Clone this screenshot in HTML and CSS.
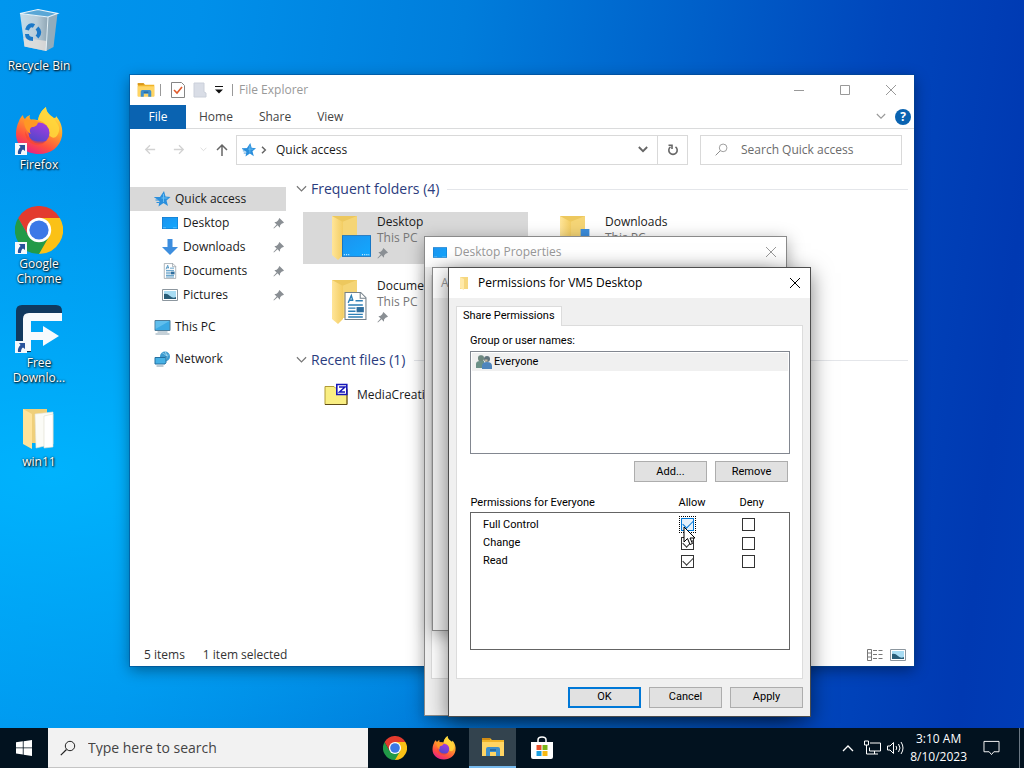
FILE: index.html
```html
<!DOCTYPE html>
<html lang="en">

<head>
    <meta charset="UTF-8">
    <meta name="viewport" content="width=device-width, initial-scale=1.0">
    <title>Desktop</title>
    <link rel="stylesheet" href="styles.css">
</head>

<body>
    <!-- shared icons -->
    <svg class="sprite" aria-hidden="true">
        <defs>
            <linearGradient id="g-fox" x1="0.8" y1="0" x2="0.3" y2="1">
                <stop offset="0" stop-color="#fff44f" />
                <stop offset="0.4" stop-color="#ffa32a" />
                <stop offset="0.75" stop-color="#ff4f40" />
                <stop offset="1" stop-color="#e5208a" />
            </linearGradient>
            <linearGradient id="g-globe" x1="0.7" y1="0" x2="0.3" y2="1">
                <stop offset="0" stop-color="#a53be0" />
                <stop offset="1" stop-color="#4b49c8" />
            </linearGradient>
            <linearGradient id="g-screen" x1="0" y1="0" x2="1" y2="1">
                <stop offset="0" stop-color="#1c93ee" />
                <stop offset="1" stop-color="#12a8ff" />
            </linearGradient>
            <linearGradient id="g-folder" x1="0" y1="0" x2="1" y2="0">
                <stop offset="0" stop-color="#ffe599" />
                <stop offset="1" stop-color="#f3cd62" />
            </linearGradient>
            <linearGradient id="g-bin" x1="0" y1="0" x2="1" y2="0">
                <stop offset="0" stop-color="#c3dcea" />
                <stop offset="0.6" stop-color="#b9cdd9" />
                <stop offset="1" stop-color="#8fa6b5" />
            </linearGradient>
        </defs>
        <symbol id="bin" viewBox="0 0 48 48">
            <path d="M5 5.500 33 9 31 43 9.500 38.500z" fill="url(#g-bin)" />
            <path d="M33 9 42.500 5.500 38.500 39 31 43z" fill="#92acbc" />
            <path d="M8.500 30 32 33 31 43 9.500 38.500z" fill="#e4dedb" opacity=".8" />
            <path d="M5 5.500 23 1.500 42.500 5.500 33 9z" fill="#5aa7d6" stroke="#eaf4fa" stroke-width="1.200" />
            <path d="M33 9 31 43" stroke="#e7f1f6" />
            <g fill="none" stroke="#1a78c8" stroke-width="4">
                <path d="M12 22c1-4 4-6 7-4" />
                <path d="M22 20c3 3 3 6 0 9" />
                <path d="M18 31c-4 0-6-2-6-5" />
            </g>
        </symbol>
        <symbol id="firefox" viewBox="0 0 48 48">
            <path d="M4 14c1-3 2-4 4-6 0 2 1 3 2 4 2-3 3-3 5-4-1 2 0 4 1 5 2-1 5 0 7 0 1-5 3-9 8-13 0 5 4 8 8 11 2 0 2-1 2-2 5 6 7 12 6 20-2 11-11 18-23 18C10 47 1 38 1 27c0-5 1-9 3-13z" fill="url(#g-fox)" />
            <path d="M31 0c-5 4-7 8-8 13 7 2 12 7 11 15 5 6 9 1 10-4 1-4-1-7-5-12-5-4-8-7-8-12z" fill="#ffd83c" opacity=".85" />
            <circle cx="24" cy="26" r="10.500" fill="url(#g-globe)" />
            <path d="M9 14c5-2 10-2 14 1 0 3-3 5-6 5-2 1-3 4-1 7-4-2-7-7-7-13z" fill="#ff9824" />
            <path d="M10 24c4 9 10 12 21 10-5 7-21 5-21-10z" fill="#f5452f" opacity=".65" />
        </symbol>
        <symbol id="chrome" viewBox="0 0 48 48">
            <path d="M24 24V12H44.800A24 24 0 0 1 24 48z" fill="#fbc116" />
            <path d="M3.200 12A24 24 0 0 0 24 48l10.400-18L24 24 13.600 30z" fill="#229a48" />
            <path d="M24 12h20.800A24 24 0 0 0 3.200 12l10.400 18z" fill="#e33b2e" />
            <circle cx="24" cy="24" r="12.200" fill="#fff" />
            <circle cx="24" cy="24" r="9.600" fill="#3b78e7" />
        </symbol>
        <symbol id="fdm" viewBox="0 0 48 48">
            <path d="M1 6q0-6 6-6h34q6 0 6 6v10H16v31H7q-6 0-6-6z" fill="#10395f" />
            <path d="M8 14q0-6 6-6h33v8H16v11h12v-6l16 10-16 10v-6H16v11H8z" fill="#f6fafd" />
        </symbol>
        <symbol id="shortcut" viewBox="0 0 12 12">
            <path d="M0 0h12v12H0z" fill="#f5f8fb" />
            <path d="M4 2h6v6L8 6.500C6.500 7.500 6 9 6 11H3C2.500 8 3.500 6 5.500 4z" fill="#28539c" />
        </symbol>
        <symbol id="openfolder" viewBox="0 0 48 48">
            <path d="M8 5h24v34H8z" fill="#efcf7a" />
            <path d="M20 10l18-2v32l-17 4z" fill="#fbfbf6" stroke="#e4e2d4" stroke-width=".6" />
            <path d="M29 12l9-2v33l-9 1z" fill="#fff" stroke="#dedccf" stroke-width=".6" />
            <path d="M8 5l9 5v35L8 40z" fill="#ffe39a" />
        </symbol>
        <symbol id="folder" viewBox="0 0 42 46">
            <path d="M2 2h25v38H2z" fill="#edc85e" />
            <path d="M12 8 27 2v38H12z" fill="#f5d576" />
            <path d="M2 2l11 6v33l-5 5-6-5z" fill="url(#g-folder)" />
        </symbol>
        <symbol id="monitor" viewBox="0 0 16 12">
            <path d="M0 0h16v12H0z" fill="#1673c0" />
            <path d="M.5.5h15v11H.5z" fill="url(#g-screen)" />
            <path d="M1 10.800h3M11 10.800h4" stroke="#fff" stroke-width=".5" stroke-dasharray=".6 .6" />
        </symbol>
        <symbol id="down" viewBox="0 0 16 16">
            <path d="M5.500 0h5v8H16l-8 8-8-8h5.500z" fill="#3d8ede" />
        </symbol>
        <symbol id="doc" viewBox="0 0 22 28">
            <path d="M1 1h15l5 5v21H1z" fill="#fff" stroke="#748089" />
            <path d="M15.500 1v5.500H21" fill="none" stroke="#748089" />
            <path d="M4 11 7 4l1.500 5M5 8.500h4M11 9h7M4 13h14M4 16h7M4 19h7M4 22h14M4 24.500h14" fill="none" stroke="#2d7fb5" stroke-width="1.300" />
            <path d="M12 15h7v5h-7z" fill="#2e6e9e" />
        </symbol>
        <symbol id="picture" viewBox="0 0 16 12">
            <path d="M.5.5h15v11H.5z" fill="#fff" stroke="#8c969e" />
            <path d="M2 2h12v8H2z" fill="#a8dcf3" />
            <path d="M2 5q3-1 6 2t6 1v2H2z" fill="#285d78" />
        </symbol>
        <symbol id="pc" viewBox="0 0 16 16">
            <path d="M.5 1.500h15v10H.5z" fill="#3ba9e4" stroke="#4f7d9a" />
            <path d="M1 2h14L1 10z" fill="#79cdf4" opacity=".6" />
            <path d="M3 13h10M1 15h14" stroke="#8ba2b1" />
        </symbol>
        <symbol id="network" viewBox="0 0 16 16">
            <circle cx="10.500" cy="5.500" r="5" fill="#3e9bd0" />
            <path d="M8 2c3 1 2 3 6 2M11 1q3 5 0 9" fill="none" stroke="#9ed6ee" />
            <path d="M.5 6.500h10l1-1v6l-1 1.500H.5z" fill="#47b1e5" stroke="#256f9f" />
            <path d="M2 15h7" stroke="#7c98a8" />
        </symbol>
        <symbol id="star" viewBox="0 0 16 16">
            <path d="M9.500 0 11 5.500l5 .5-4 3.500L13.500 15 9 12l-5 3.500L5 10 0 6.500l5.500-.500z" fill="#2b8fdc" />
            <path d="M0 6.500h6M1 9h5M2 11.500h3" stroke="#2b8fdc" stroke-width="1" />
            <path d="M9 3v8M7 7h6" stroke="#67bdf3" stroke-width="1" />
        </symbol>
        <symbol id="pin" viewBox="0 0 12 12">
            <path d="M7 0 12 5 10.500 6 10 5.800 7.800 8 7.500 10.500 5 8 1 11.500 .5 11 4 7 1.500 4.500 4 4.200 6.200 2 6 1.500z" fill="#8a8f94" />
        </symbol>
        <symbol id="chevron" viewBox="0 0 12 8">
            <path d="M1 1l5 5 5-5" fill="none" stroke="currentColor" stroke-width="1.300" />
        </symbol>
        <symbol id="boldchevron" viewBox="0 0 12 8">
            <path d="M1 1l5 5 5-5" fill="none" stroke="currentColor" stroke-width="2.200" />
        </symbol>
        <symbol id="close" viewBox="0 0 12 12">
            <path d="M1 1l10 10M11 1 1 11" stroke="currentColor" fill="none" />
        </symbol>
        <symbol id="arrow" viewBox="0 0 14 12">
            <path d="M13 6H2M7 1 2 6l5 5" stroke="currentColor" stroke-width="1.500" fill="none" />
        </symbol>
        <symbol id="lens" viewBox="0 0 16 16">
            <circle cx="10" cy="6" r="4.700" fill="none" stroke="currentColor" />
            <path d="M6.500 9.500.8 15.200" stroke="currentColor" stroke-width="1.200" />
        </symbol>
        <symbol id="explorer" viewBox="0 0 24 20">
            <path d="M1 1h8l2 2h12v15H1z" fill="#f0b429" />
            <path d="M1 5h22v14H1z" fill="#ffd564" />
            <path d="M1 1h8v2H1z" fill="#d28c14" />
            <path d="M5 19v-7q0-2 2-2h10q2 0 2 2v7h-4v-4H9v4z" fill="#3e8fcb" />
            <path d="M9 12h6v2H9z" fill="#276da5" />
        </symbol>
    </svg>

    <main class="desktop">
        <nav class="shortcuts" aria-label="Desktop icons">
            <a class="shortcut" href="#"><span class="shortcut-icon"><svg><use href="#bin" /></svg></span>Recycle Bin</a>
            <a class="shortcut" href="#"><span class="shortcut-icon"><svg><use href="#firefox" /></svg><svg class="link-mark"><use href="#shortcut" /></svg></span>Firefox</a>
            <a class="shortcut" href="#"><span class="shortcut-icon"><svg><use href="#chrome" /></svg><svg class="link-mark"><use href="#shortcut" /></svg></span>Google<br>Chrome</a>
            <a class="shortcut" href="#"><span class="shortcut-icon"><svg><use href="#fdm" /></svg><svg class="link-mark"><use href="#shortcut" /></svg></span>Free<br>Downlo...</a>
            <a class="shortcut" href="#"><span class="shortcut-icon"><svg><use href="#openfolder" /></svg></span>win11</a>
        </nav>

        <section class="window explorer" aria-label="File Explorer">
            <header class="explorer-title">
                <svg class="app-icon"><use href="#explorer" /></svg>
                <span class="bar"></span>
                <button class="quick" aria-label="Properties"><svg viewBox="0 0 14 16"><path d="M.5.5h10l3 3v12H.5z" fill="#fff" stroke="#858585" /><path d="M3 8l3 3 5-6" fill="none" stroke="#e05a2b" stroke-width="1.600" /></svg></button>
                <button class="quick" aria-label="New folder"><svg viewBox="0 0 14 16"><path d="M1 1h10v9l2 1v4H1z" fill="#d9dde6" stroke="#cbd0da" /></svg></button>
                <button class="quick small" aria-label="Customize"><svg viewBox="0 0 8 8"><path d="M0 .5h8" stroke="#111" /><path d="M0 3.500h8L4 7.500z" fill="#111" /></svg></button>
                <span class="bar"></span>
                <span class="explorer-name">File Explorer</span>
                <div class="window-buttons">
                    <button aria-label="Minimize"><svg viewBox="0 0 12 12"><path d="M1 6.500h10" stroke="currentColor" /></svg></button>
                    <button aria-label="Maximize"><svg viewBox="0 0 12 12"><path d="M1.500 1.500h9v9h-9z" fill="none" stroke="currentColor" /></svg></button>
                    <button aria-label="Close"><svg><use href="#close" /></svg></button>
                </div>
            </header>
            <nav class="ribbon" aria-label="Ribbon">
                <a class="file-tab" href="#">File</a>
                <a href="#">Home</a>
                <a href="#">Share</a>
                <a href="#">View</a>
                <button class="expand" aria-label="Expand ribbon"><svg><use href="#chevron" /></svg></button>
                <button class="help" aria-label="Help">?</button>
            </nav>
            <div class="address-row">
                <button class="nav-button faded" aria-label="Back"><svg><use href="#arrow" /></svg></button>
                <button class="nav-button faded forward" aria-label="Forward"><svg><use href="#arrow" /></svg></button>
                <button class="nav-button faded tiny" aria-label="Recent"><svg><use href="#chevron" /></svg></button>
                <button class="nav-button up" aria-label="Up"><svg><use href="#arrow" /></svg></button>
                <div class="address">
                    <svg class="address-star"><use href="#star" /></svg>
                    <svg class="crumb"><use href="#boldchevron" /></svg>
                    <span class="address-text">Quick access</span>
                    <button class="history" aria-label="Previous locations"><svg><use href="#boldchevron" /></svg></button>
                    <button class="refresh" aria-label="Refresh"><svg viewBox="0 0 12 12"><path d="M8.500 2.800A4.200 4.200 0 1 1 3.500 2.800M1.500 1.200H5V5" fill="none" stroke="currentColor" stroke-width="1.600" /></svg></button>
                </div>
                <label class="find">
                    <svg><use href="#lens" /></svg>
                    <input type="text" placeholder="Search Quick access" aria-label="Search Quick access">
                </label>
            </div>
            <div class="explorer-body">
                <nav class="tree" aria-label="Folders">
                    <a class="root selected" href="#"><svg><use href="#star" /></svg>Quick access</a>
                    <a href="#"><svg><use href="#monitor" /></svg>Desktop<svg class="pin"><use href="#pin" /></svg></a>
                    <a href="#"><svg><use href="#down" /></svg>Downloads<svg class="pin"><use href="#pin" /></svg></a>
                    <a href="#"><svg><use href="#doc" /></svg>Documents<svg class="pin"><use href="#pin" /></svg></a>
                    <a href="#"><svg><use href="#picture" /></svg>Pictures<svg class="pin"><use href="#pin" /></svg></a>
                    <a class="root spaced" href="#"><svg><use href="#pc" /></svg>This PC</a>
                    <a class="root spaced" href="#"><svg><use href="#network" /></svg>Network</a>
                </nav>
                <div class="content">
                    <h2><svg><use href="#chevron" /></svg>Frequent folders (4)</h2>
                    <div class="folders">
                        <a class="folder selected" href="#">
                            <span class="folder-icon"><svg><use href="#folder" /></svg><svg class="badge screen"><use href="#monitor" /></svg></span>
                            <span class="folder-text">Desktop<small>This PC</small><svg class="pin"><use href="#pin" /></svg></span>
                        </a>
                        <a class="folder" href="#">
                            <span class="folder-icon"><svg><use href="#folder" /></svg><svg class="badge download"><use href="#down" /></svg></span>
                            <span class="folder-text">Downloads<small>This PC</small><svg class="pin"><use href="#pin" /></svg></span>
                        </a>
                        <a class="folder" href="#">
                            <span class="folder-icon"><svg><use href="#folder" /></svg><svg class="badge paper"><use href="#doc" /></svg></span>
                            <span class="folder-text">Documents<small>This PC</small><svg class="pin"><use href="#pin" /></svg></span>
                        </a>
                    </div>
                    <h2><svg><use href="#chevron" /></svg>Recent files (1)</h2>
                    <a class="recent" href="#">
                        <svg viewBox="0 0 24 22"><path d="M1 3h9l2 2h11v16H1z" fill="#f9ee82" stroke="#b09a35" /><path d="M1 21h22V6" fill="none" stroke="#5f4c17" /><path d="M12.800 1h10v10h-10z" fill="#fff" stroke="#1616b8" stroke-width="1.600" /><path d="M15 3.500h6L15.500 8.500H21" fill="none" stroke="#1616b8" stroke-width="1.500" /></svg>
                        MediaCreationTool22H2
                    </a>
                </div>
            </div>
            <footer class="status">
                <span>5 items</span>
                <span>1 item selected</span>
                <div class="views">
                    <button aria-label="Details view"><svg viewBox="0 0 16 12"><path d="M.5.5h4v11h-4zM.5 4h4M.5 8h4" fill="none" stroke="#777" /><path d="M6 1.500h10M6 5.500h10M6 9.500h10" stroke="#777" stroke-dasharray="4 1.500" /></svg></button>
                    <button aria-label="Large icons view"><svg><use href="#picture" /></svg></button>
                </div>
            </footer>
        </section>

        <section class="window dialog properties" aria-label="Desktop Properties">
            <header class="dialog-title">
                <svg class="title-icon"><use href="#monitor" /></svg>
                <span>Desktop Properties</span>
                <button aria-label="Close"><svg><use href="#close" /></svg></button>
            </header>
            <div class="properties-page"></div>
        </section>

        <section class="window dialog sharing" aria-label="Advanced Sharing">
            <header class="dialog-title"><span>A</span></header>
        </section>

        <section class="window dialog permissions" aria-label="Permissions for VM5 Desktop">
            <header class="dialog-title">
                <svg class="title-icon" viewBox="0 0 14 14"><path d="M3 1h8v12H3z" fill="#f6d77f" /><path d="M3 1l4 2v11l-4-2z" fill="#ffe9a8" /></svg>
                <span>Permissions for VM5 Desktop</span>
                <button aria-label="Close"><svg><use href="#close" /></svg></button>
            </header>
            <form class="permissions-form">
                <button class="tab" type="button">Share Permissions</button>
                <div class="page">
                    <div class="caption" id="group-label">Group or user names:</div>
                    <ul class="group-list" aria-labelledby="group-label">
                        <li>
                            <svg viewBox="0 0 16 14"><circle cx="5" cy="3.500" r="3" fill="#7f9488" /><path d="M0 13V9q0-3 4-3h4v7z" fill="#6b9087" /><path d="M2 3q0-3 3-3t3 3l-1 3H3z" fill="#63807a" opacity=".6" /><circle cx="11" cy="4" r="3" fill="#60737c" /><path d="M6 14v-3q0-4 5-4t5 4v3z" fill="#4f85bd" /><path d="M8.500 4.500h3v2h-2z" fill="#c9b79e" /></svg>
                            Everyone
                        </li>
                    </ul>
                    <div class="list-actions">
                        <button type="button">Add...</button>
                        <button type="button">Remove</button>
                    </div>
                    <table class="rights">
                        <thead>
                            <tr><th scope="col">Permissions for Everyone</th><th scope="col">Allow</th><th scope="col">Deny</th></tr>
                        </thead>
                        <tbody>
                            <tr>
                                <th scope="row">Full Control</th>
                                <td><input class="focused" type="checkbox" aria-label="Allow Full Control" checked></td>
                                <td><input type="checkbox" aria-label="Deny Full Control"></td>
                            </tr>
                            <tr>
                                <th scope="row">Change</th>
                                <td><input type="checkbox" aria-label="Allow Change" checked></td>
                                <td><input type="checkbox" aria-label="Deny Change"></td>
                            </tr>
                            <tr>
                                <th scope="row">Read</th>
                                <td><input type="checkbox" aria-label="Allow Read" checked></td>
                                <td><input type="checkbox" aria-label="Deny Read"></td>
                            </tr>
                            <tr class="spare"><td colspan="3"></td></tr>
                        </tbody>
                    </table>
                </div>
                <div class="dialog-actions">
                    <button class="default" type="button">OK</button>
                    <button type="button">Cancel</button>
                    <button type="button">Apply</button>
                </div>
            </form>
        </section>

        <svg class="pointer" viewBox="0 0 13 20" aria-hidden="true"><path d="M1 1v15l3.500-3.500L7 18.500l2.500-1L7 12h5z" fill="#fff" stroke="#000" /></svg>
    </main>

    <footer class="taskbar">
        <button class="start" aria-label="Start"><svg viewBox="0 0 16 16"><path d="M0 2.300 6.800 1.300V7.500H0zM7.600 1.200 16 0v7.500H7.600zM0 8.300h6.800v6.200L0 13.600zM7.600 8.300H16V16l-8.400-1.300z" fill="#fff" /></svg></button>
        <label class="task-search">
            <svg><use href="#lens" /></svg>
            <input type="text" placeholder="Type here to search" aria-label="Type here to search">
        </label>
        <div class="tasks">
            <button aria-label="Google Chrome"><svg><use href="#chrome" /></svg></button>
            <button aria-label="Firefox"><svg><use href="#firefox" /></svg></button>
            <button class="running" aria-label="File Explorer"><svg><use href="#explorer" /></svg></button>
            <button aria-label="Microsoft Store"><svg viewBox="0 0 24 24"><path d="M8 7V4q0-3 4-3t4 3v3" fill="none" stroke="#fff" stroke-width="1.500" /><path d="M1 6h22v15q0 2-2 2H3q-2 0-2-2z" fill="#fff" /><path d="M6.500 9h5v5h-5z" fill="#e8502b" /><path d="M12.500 9h5v5h-5z" fill="#7cb518" /><path d="M6.500 15h5v5h-5z" fill="#1a9fe0" /><path d="M12.500 15h5v5h-5z" fill="#f9b913" /></svg></button>
        </div>
        <div class="tray">
            <button class="tray-up" aria-label="Show hidden icons"><svg><use href="#chevron" /></svg></button>
            <button aria-label="Network"><svg viewBox="0 0 17 15"><path d="M6 2.500h10.500v8H5.500V7M10.500 10.500v3M6 13.500h8M.5.500h4v4h-4zM2.500 4.500v9H6" fill="none" stroke="#fff" /></svg></button>
            <button aria-label="Volume"><svg viewBox="0 0 17 15"><path d="M.5 5.500h2.500l3.500-3.500v11L3 9.500H.5zM9 5.500q1.500 2 0 4M11.500 3.500q3 4 0 8M14 1.500q4 6 0 12" fill="none" stroke="#fff" /></svg></button>
            <time class="clock" datetime="2023-08-10T03:10"><span>3:10 AM</span><span>8/10/2023</span></time>
            <button class="notices" aria-label="Notifications"><svg viewBox="0 0 17 17"><path d="M.5 1.500h16v11h-5.500l-2.500 3-2.500-3H.5z" fill="none" stroke="#fff" /></svg></button>
        </div>
    </footer>
</body>

</html>
```
FILE: styles.css
```css
* {
    box-sizing: border-box;
}

html,
body {
    height: 100%;
    margin: 0;
}

body {
    display: flex;
    flex-direction: column;
    overflow: hidden;
    font: 12px/16px "Open Sans", "Noto Sans", sans-serif;
    color: #1a1a1a;
}

a {
    color: inherit;
    text-decoration: none;
}

button {
    padding: 0;
    border: 0;
    background: none;
    color: inherit;
    font: inherit;
}

input {
    min-width: 0;
    border: 0;
    background: none;
    font: inherit;
    outline: 0;
}

svg {
    display: block;
    flex: none;
    width: 16px;
    height: 16px;
}

.sprite {
    position: absolute;
    width: 0;
    height: 0;
}

.desktop {
    position: relative;
    flex: 1;
    min-height: 0;
    overflow: hidden;
    background:
        radial-gradient(ellipse at 5% 65%, rgba(0, 182, 255, .9) 0%, rgba(0, 170, 250, 0) 50%),
        linear-gradient(97deg, #0096ee 0%, #0090ea 18%, #007ddb 42%, #0061ca 62%, #0046bc 80%, #0039b2 94%, #003cb6 100%);
}

/* desktop shortcuts */
.shortcuts {
    display: grid;
    grid-template-columns: 78px;
    grid-auto-rows: 99px;
}

.shortcut {
    display: flex;
    flex-direction: column;
    align-items: center;
    padding-top: 8px;
    color: #fff;
    line-height: 15px;
    text-align: center;
    white-space: nowrap;
    text-shadow: 1px 1px 2px #000, 0 0 2px rgba(0, 0, 0, .8);
}

.shortcut-icon {
    position: relative;
    margin-bottom: 2px;
}

.shortcut-icon svg {
    width: 48px;
    height: 48px;
}

.shortcut-icon .link-mark {
    position: absolute;
    left: 0;
    bottom: 0;
    width: 12px;
    height: 12px;
}

/* windows */
.window {
    position: absolute;
    display: flex;
    flex-direction: column;
}

.explorer {
    inset: 75px 110px 62px 130px;
    background: #fff;
    box-shadow: 0 0 0 1px rgba(0, 70, 140, .5), 0 4px 14px rgba(0, 0, 0, .4);
}

.explorer-title {
    display: flex;
    align-items: center;
    height: 30px;
    padding-left: 7px;
    color: #999;
}

.explorer-title .app-icon {
    width: 18px;
}

.bar {
    width: 1px;
    height: 12px;
    margin: 0 6px 0 5px;
    background: #999;
}

.quick {
    margin: 0 4px;
}

.quick svg {
    width: 14px;
}

.quick.small svg {
    width: 8px;
    height: 8px;
}

.window-buttons {
    display: flex;
    margin-left: auto;
}

.window-buttons button {
    display: grid;
    place-items: center;
    width: 46px;
    height: 28px;
}

.window-buttons svg {
    width: 12px;
    height: 12px;
}

.ribbon {
    display: flex;
    align-items: stretch;
    height: 24px;
    border-bottom: 1px solid #dadbdc;
    line-height: 24px;
    color: #444;
}

.ribbon a {
    padding: 0 13px;
}

.ribbon .file-tab {
    width: 56px;
    margin-bottom: -1px;
    padding: 0;
    background: #0a63b1;
    color: #fff;
    text-align: center;
}

.ribbon .expand {
    margin-left: auto;
    color: #999;
}

.expand svg {
    width: 10px;
    height: 7px;
}

.help {
    align-self: center;
    width: 16px;
    height: 16px;
    margin: 0 3px 0 9px;
    border-radius: 50%;
    background: #0a63b1;
    color: #fff;
    font-weight: bold;
    line-height: 16px;
}

.address-row {
    display: flex;
    align-items: center;
    height: 41px;
    padding: 0 12px 0 5px;
}

.nav-button {
    display: grid;
    place-items: center;
    width: 29px;
    height: 30px;
    color: #666;
}

.nav-button svg {
    width: 12px;
    height: 11px;
}

.nav-button.faded {
    color: #d2d2d2;
}

.nav-button.tiny {
    width: 20px;
}

.nav-button.tiny svg {
    width: 7px;
    height: 5px;
}

.forward svg {
    transform: scaleX(-1);
}

.nav-button.up {
    width: 18px;
    margin-right: 5px;
}

.nav-button.up svg {
    width: 14px;
    height: 12px;
    transform: rotate(90deg);
}

.address {
    display: flex;
    flex: 1;
    align-items: center;
    height: 30px;
    border: 1px solid #d9d9d9;
    color: #666;
}

.address-star {
    width: 14px;
    height: 14px;
    margin-left: 5px;
}

.crumb {
    width: 8px;
    height: 6px;
    margin: 0 8px 0 4px;
    transform: rotate(-90deg);
}

.address-text {
    flex: 1;
    color: #1a1a1a;
}

.history svg {
    width: 10px;
    height: 7px;
    margin-right: 9px;
}

.refresh {
    display: grid;
    place-items: center;
    align-self: stretch;
    width: 30px;
    border-left: 1px solid #d9d9d9;
}

.refresh svg {
    width: 12px;
    height: 12px;
}

.find {
    display: flex;
    align-items: center;
    width: 202px;
    height: 30px;
    margin-left: 12px;
    padding-left: 14px;
    border: 1px solid #d9d9d9;
    color: #8a8a8a;
}

.find svg {
    width: 13px;
    height: 13px;
}

.find input {
    flex: 1;
    margin-left: 11px;
    padding: 0 2px;
}

.find input::placeholder {
    color: #6b6b6b;
}

.explorer-body {
    display: flex;
    flex: 1;
    min-height: 0;
    padding-top: 7px;
}

.tree {
    width: 156px;
    margin: 10px 10px 0 0;
}

.tree a {
    display: flex;
    align-items: center;
    gap: 5px;
    height: 24px;
    padding-left: 32px;
}

.tree .root {
    gap: 4px;
    padding-left: 24px;
}

.tree .root svg {
    width: 17px;
}

.tree .spaced {
    margin-top: 8px;
}

.selected {
    background: #d9d9d9;
}

svg.pin {
    width: 11px;
    height: 11px;
}

.tree .pin {
    margin: 0 2px 0 auto;
}

.content {
    flex: 1;
    min-width: 0;
    padding-right: 6px;
}

.content h2 {
    display: flex;
    align-items: center;
    gap: 4px;
    height: 24px;
    margin: 0;
    color: #2b3c7e;
    font-size: 14px;
    font-weight: normal;
}

.content h2 svg {
    width: 11px;
    height: 8px;
    color: #777;
}

.content h2::after {
    content: "";
    flex: 1;
    height: 1px;
    margin-left: 4px;
    background: #e4e6ea;
}

.folders {
    display: grid;
    grid-template-columns: repeat(auto-fill, 225px);
    grid-auto-rows: 52px;
    gap: 12px 3px;
    padding: 11px 7px 20px;
}

.folder {
    display: flex;
    align-items: flex-start;
    gap: 5px;
    padding: 2px 0 0 27px;
}

.folder-icon {
    position: relative;
}

.folder-icon svg {
    width: 42px;
    height: 46px;
}

.folder-icon .badge {
    position: absolute;
    right: 1px;
    bottom: 3px;
}

.folder-icon .screen {
    width: 29px;
    height: 22px;
}

.folder-icon .download {
    right: 1px;
    width: 28px;
    height: 28px;
}

.folder-icon .paper {
    right: 5px;
    width: 23px;
    height: 30px;
}

.folder-text small {
    display: block;
    color: #777;
    font-size: 12px;
}

.folder-text .pin {
    margin-top: 2px;
}

.recent {
    display: flex;
    align-items: center;
    gap: 9px;
    margin: 11px 0 0 28px;
}

.recent svg {
    width: 24px;
    height: 23px;
}

.status {
    display: flex;
    align-items: center;
    gap: 18px;
    height: 24px;
    padding: 2px 8px 0 14px;
    color: #333;
}

.views {
    display: flex;
    gap: 7px;
    margin-left: auto;
}

.views svg {
    height: 12px;
}

/* dialogs */
.dialog {
    border: 1px solid #8a8a8a;
    background: #f0f0f0;
    box-shadow: 0 4px 16px rgba(0, 0, 0, .35);
}

.dialog-title {
    display: flex;
    align-items: center;
    gap: 7px;
    height: 30px;
    padding: 0 9px 0 8px;
    background: #fff;
    color: #999;
}

.dialog-title button {
    margin-left: auto;
}

.dialog-title button svg {
    width: 12px;
    height: 12px;
}

.dialog-title .title-icon {
    width: 14px;
    height: 11px;
}

.properties {
    top: 236px;
    left: 424px;
    width: 363px;
    height: 480px;
}

.properties-page {
    flex: 1;
    margin: 8px 6px 36px;
    border: 1px solid #dcdcdc;
    background: #fff;
}

.sharing {
    top: 267px;
    left: 432px;
    width: 340px;
    height: 364px;
}

.permissions {
    top: 267px;
    left: 448px;
    width: 363px;
    border-color: #4d4d4d;
    box-shadow: 0 6px 20px rgba(0, 0, 0, .5);
}

.permissions .dialog-title {
    color: #000;
}

.permissions .title-icon {
    height: 14px;
}

.permissions-form {
    padding: 8px 7px;
    color: #000;
    font-family: Roboto, "Liberation Sans", sans-serif;
    font-size: 11px;
}

.tab {
    position: relative;
    display: block;
    height: 20px;
    margin-bottom: -1px;
    padding: 0 6px 2px;
    border: 1px solid #dcdcdc;
    border-bottom: 0;
    background: #fff;
}

.page {
    padding: 7px 12px 28px 13px;
    border: 1px solid #dcdcdc;
    background: #fff;
}

.group-list {
    height: 103px;
    margin: 2px 0 7px;
    padding: 1px;
    border: 1px solid #828790;
    list-style: none;
}

.group-list li {
    display: flex;
    align-items: center;
    gap: 2px;
    height: 18px;
    padding-left: 4px;
    background: #f0f0f0;
}

.group-list svg {
    height: 14px;
}

.list-actions,
.dialog-actions {
    display: flex;
    justify-content: flex-end;
    gap: 8px;
}

.list-actions {
    padding-right: 2px;
}

.list-actions button,
.dialog-actions button {
    width: 73px;
    height: 21px;
    border: 1px solid #adadad;
    background: #e1e1e1;
}

.dialog-actions {
    margin-top: 8px;
}

.dialog-actions .default {
    border: 2px solid #0078d7;
}

.rights {
    width: 100%;
    margin-top: 12px;
    border-collapse: collapse;
    table-layout: fixed;
}

.rights th,
.rights td {
    height: 18px;
    padding: 0;
    font-weight: normal;
    text-align: left;
}

.rights thead th:nth-child(2) {
    width: 61px;
}

.rights thead th:nth-child(3) {
    width: 50px;
}

.rights tbody {
    border: 1px solid #646464;
}

.rights tbody th {
    padding-left: 12px;
}

.rights tbody tr:first-child > * {
    height: 22px;
    padding-top: 3px;
}

.rights .spare td {
    height: 79px;
}

.rights input {
    display: block;
    position: relative;
    width: 13px;
    height: 13px;
    margin: 0 2px;
    border: 1px solid #333;
    background: #fff;
    appearance: none;
}

.rights input:checked::after {
    content: "";
    position: absolute;
    top: 1px;
    left: 1px;
    width: 9px;
    height: 5px;
    border: solid #333;
    border-width: 0 0 1px 1px;
    transform: rotate(-45deg);
}

.rights .focused {
    border-color: #0078d7;
    background: #e5f1fb;
    outline: 1px dotted #000;
    outline-offset: 1px;
}

.rights .focused:checked::after {
    border-color: #0078d7;
}

.pointer {
    position: absolute;
    top: 526px;
    left: 683px;
    width: 13px;
    height: 20px;
}

/* taskbar */
.taskbar {
    display: flex;
    height: 40px;
    background: #02121f;
    color: #fff;
}

.start {
    display: grid;
    place-items: center;
    width: 48px;
}

.task-search {
    display: flex;
    align-items: center;
    flex: 0 1 320px;
    gap: 10px;
    padding: 0 12px;
    border-bottom: 1px solid #c4c4c4;
    background: #f2f2f2;
    color: #222;
}

.task-search input {
    flex: 1;
    padding: 0 2px;
    font-size: 14px;
}

.task-search input::placeholder {
    color: #444;
}

.tasks {
    display: flex;
    gap: 2px;
    margin-left: 3px;
}

.tasks button {
    display: grid;
    place-items: center;
    width: 47px;
}

.tasks svg {
    width: 24px;
    height: 24px;
}

.tasks .running {
    border-bottom: 2px solid #76b9ed;
    background: #33434e;
}

.tray {
    display: flex;
    align-items: center;
    gap: 6px;
    margin-left: auto;
    margin-right: 4px;
    padding-right: 19px;
    border-right: 1px solid #6b7884;
}

.tray svg {
    width: 17px;
    height: 16px;
}

.tray .tray-up svg {
    width: 12px;
    height: 8px;
    margin-right: 4px;
    transform: rotate(180deg);
}

.clock {
    display: flex;
    flex-direction: column;
    line-height: 18px;
    text-align: center;
}

.notices {
    margin-left: 10px;
}
```
